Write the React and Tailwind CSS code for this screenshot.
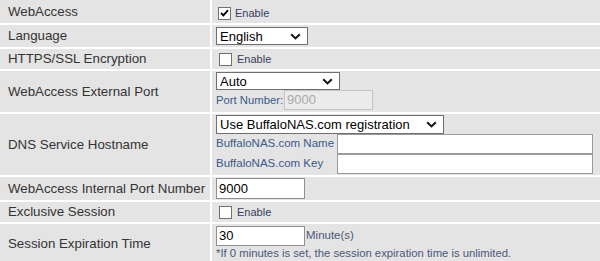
import React from "react";

const Chevron = () => (
  <svg width="11" height="7" viewBox="0 0 11 7" className="shrink-0">
    <path d="M1.2 1.2 L5.5 5.4 L9.8 1.2" fill="none" stroke="#111" strokeWidth="2" />
  </svg>
);

const Select = ({ value, className }) => (
  <div
    className={
      "flex items-center justify-between bg-white border border-[#6f6f6f] pl-[3px] pr-[6px] text-[13px] leading-none text-black " +
      className
    }
  >
    <span className="whitespace-nowrap">{value}</span>
    <Chevron />
  </div>
);

const Checkbox = ({ checked }) => (
  <span className="w-[13px] h-[13px] border border-[#707070] bg-white flex items-center justify-center shrink-0">
    {checked && (
      <svg width="9" height="8" viewBox="0 0 9 8">
        <path d="M1 4 L3.4 6.4 L8 1.2" fill="none" stroke="#000" strokeWidth="1.8" />
      </svg>
    )}
  </span>
);

const Label = ({ children }) => (
  <div className="bg-[#e4e4e4] flex items-center pl-[8px] text-[13.3px] text-[#333] whitespace-nowrap">{children}</div>
);

const Row = ({ h, label, children }) => (
  <div className={"grid grid-cols-[210px_1fr] gap-x-[2px] " + h}>
    <Label>{label}</Label>
    <div className="bg-[#e4e4e4] min-w-0">{children}</div>
  </div>
);

export default function App() {
  return (
    <div className="w-[600px] h-[261px] overflow-hidden bg-white font-['Liberation_Sans',Arial,sans-serif]">
      <div className="flex flex-col gap-y-[2px]">
        <Row h="h-[23px]" label="WebAccess">
          <div className="h-full flex items-center pl-[6px] pt-[3px] gap-[4px]">
            <Checkbox checked />
            <span className="text-[11px] text-[#34405a]">Enable</span>
          </div>
        </Row>
        <Row h="h-[22px]" label="Language">
          <div className="h-full pl-[4px] pt-[2px]">
            <Select value="English" className="w-[92px] h-[18px]" />
          </div>
        </Row>
        <Row h="h-[20px]" label="HTTPS/SSL Encryption">
          <div className="h-full flex items-center pl-[7px] pt-[1px] gap-[5px]">
            <Checkbox />
            <span className="text-[11px] text-[#34405a]">Enable</span>
          </div>
        </Row>
        <Row h="h-[41px]" label="WebAccess External Port">
          <div className="h-full flex flex-col pl-[4px] pt-[1px]">
            <Select value="Auto" className="w-[124px] h-[18px]" />
            <div className="flex items-center">
              <span className="text-[11.3px] text-[#3a5a8a] w-[68px] shrink-0 whitespace-nowrap">Port Number:</span>
              <div className="w-[89px] h-[20px] bg-[#ebebeb] border border-[#c3c3c3] text-[13px] text-[#a9a9a9] pl-[2px] flex items-center">
                9000
              </div>
            </div>
          </div>
        </Row>
        <Row h="h-[61px]" label="DNS Service Hostname">
          <div className="h-full flex flex-col pl-[4px] pt-[1px]">
            <Select value="Use BuffaloNAS.com registration" className="w-[228px] h-[19px]" />
            <div className="grid grid-cols-[121px_256px]">
              <span className="text-[11.5px] text-[#3a5a8a] self-center whitespace-nowrap">BuffaloNAS.com Name</span>
              <div className="h-[20px] bg-white border border-[#9a9a9a]"></div>
              <span className="text-[11.5px] text-[#3a5a8a] self-center whitespace-nowrap">BuffaloNAS.com Key</span>
              <div className="h-[20px] bg-white border border-[#9a9a9a]"></div>
            </div>
          </div>
        </Row>
        <Row h="h-[23px]" label="WebAccess Internal Port Number">
          <div className="h-full pl-[4px] pt-[1px]">
            <div className="w-[89px] h-[21px] bg-white border border-[#8f8f8f] text-[13px] text-black pl-[2px] flex items-center">
              9000
            </div>
          </div>
        </Row>
        <Row h="h-[20px]" label="Exclusive Session">
          <div className="h-full flex items-center pl-[7px] pt-[1px] gap-[5px]">
            <Checkbox />
            <span className="text-[11px] text-[#34405a]">Enable</span>
          </div>
        </Row>
        <Row h="h-[40px]" label="Session Expiration Time">
          <div className="h-full flex flex-col pl-[4px] pt-[2px]">
            <div className="flex items-center">
              <div className="w-[89px] h-[20px] bg-white border border-[#8f8f8f] text-[13px] text-black pl-[2px] flex items-center">
                30
              </div>
              <span className="text-[11.5px] text-[#4a5878] ml-[1px]">Minute(s)</span>
            </div>
            <span className="text-[11.3px] leading-[12px] text-[#4a5878] mt-[1px] whitespace-nowrap">
              *If 0 minutes is set, the session expiration time is unlimited.
            </span>
          </div>
        </Row>
      </div>
    </div>
  );
}
